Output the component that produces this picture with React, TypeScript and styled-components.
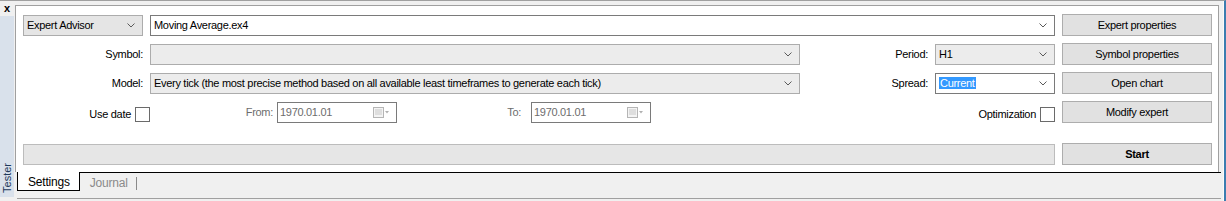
import styled, { createGlobalStyle } from "styled-components";

const GlobalStyle = createGlobalStyle`
    html, body {
        margin: 0;
        padding: 0;
        background: #f0f0f0;
    }
    * {
        box-sizing: border-box;
    }
`

const Frame = styled.div`
    display: flex;
    width: 1226px;
    height: 201px;
    background: #f0f0f0;
    border-top: 1px solid #a0a0a0;
    border-right: 2px solid #3c7db0;
    font-family: "Liberation Sans", Arial, sans-serif;
    font-size: 11px;
    letter-spacing: -0.3px;
    color: #000;
    overflow: hidden;
`
const Side = styled.div`
    display: flex;
    flex-direction: column;
    width: 15px;
    flex-shrink: 0;
`
const CloseX = styled.div`
    height: 15px;
    padding: 3px 0 0 4px;
    font-size: 11px;
    font-weight: bold;
    line-height: 9px;
    letter-spacing: 0;
`
const SideBar = styled.div`
    flex: 1;
    margin: 0 1px 4px 0;
    background: #d9e1eb;
    display: flex;
    flex-direction: column;
    justify-content: flex-end;
    align-items: center;
    padding-bottom: 4px;
`
const SideLabel = styled.span`
    writing-mode: vertical-rl;
    transform: rotate(180deg);
    font-size: 11px;
    letter-spacing: 0;
    color: #1e395b;
`
const Body = styled.div`
    flex: 1;
    display: flex;
    flex-direction: column;
    padding-top: 4px;
    padding-right: 4px;
    border-right: 1px solid #fafafa;
`
const Panel = styled.div`
    height: 167px;
    background: #fff;
    border: 1px solid #a0a0a0;
    border-bottom: none;
    padding: 8px 6px 0 7px;
    display: flex;
    flex-direction: column;
`
const Row = styled.div<{ $top?: number }>`
    display: flex;
    align-items: center;
    height: 22px;
    margin-top: ${p => p.$top ?? 7}px;
    &:first-child {
        margin-top: 0;
    }
`
const Label = styled.div<{ $w?: number; $gap?: number; $muted?: boolean }>`
    ${p => p.$w ? `width: ${p.$w}px; flex-shrink: 0;` : "flex: 1;"}
    text-align: right;
    padding-right: ${p => p.$gap ?? 7}px;
    color: ${p => p.$muted ? "#6d6d6d" : "#000"};
    white-space: nowrap;
`
const Combo = styled.div<{ $w?: number; $variant: "white" | "gray" | "button" }>`
    ${p => p.$w ? `width: ${p.$w}px; flex-shrink: 0;` : "flex: 1;"}
    height: 21px;
    display: flex;
    align-items: center;
    padding: 0 7px 0 3px;
    background: ${p => p.$variant === "white" ? "#fff" : p.$variant === "gray" ? "#ececec" : "#e5e5e5"};
    border: 1px solid ${p => p.$variant === "white" ? "#7a7a7a" : "#acacac"};
    white-space: nowrap;
    overflow: hidden;
`
const ComboText = styled.span`
    flex: 1;
    overflow: hidden;
`
const Selected = styled.span`
    background: #3399ff;
    color: #fff;
    padding: 3px 1px;
`
const Gap = styled.div<{ $w: number }>`
    width: ${p => p.$w}px;
    flex-shrink: 0;
`
const Button = styled.button<{ $bold?: boolean }>`
    width: 150px;
    height: 22px;
    flex-shrink: 0;
    margin-left: 7px;
    background: #e1e1e1;
    border: 1px solid #adadad;
    font-family: inherit;
    font-size: 11px;
    letter-spacing: -0.3px;
    font-weight: ${p => p.$bold ? "bold" : "normal"};
    color: #000;
    padding: 0;
`
const Check = styled.div`
    width: 15px;
    height: 15px;
    flex-shrink: 0;
    border: 1px solid #6a6a6a;
    background: #fff;
    margin-left: 4px;
`
const CheckCell = styled.div<{ $w?: number }>`
    ${p => p.$w ? `width: ${p.$w}px; flex-shrink: 0;` : "flex: 1;"}
    display: flex;
    align-items: center;
    justify-content: flex-end;
    white-space: nowrap;
    padding-top: 4px;
`
const DateBox = styled.div`
    width: 120px;
    height: 21px;
    flex-shrink: 0;
    display: flex;
    align-items: center;
    padding: 0 6px 0 2px;
    border: 1px solid #7a7a7a;
    background: #fff;
    color: #6d6d6d;
`
const Progress = styled.div`
    flex: 1;
    height: 21px;
    background: #e6e6e6;
    border: 1px solid #bcbcbc;
`
const TabBar = styled.div`
    display: flex;
    align-items: flex-start;
    height: 27px;
    margin-left: 2px;
    margin-right: -2px;
    border-top: 1px solid #000;
    border-bottom: 1px solid #a0a0a0;
    font-size: 12px;
    letter-spacing: -0.2px;
`
const Tab = styled.div<{ $active?: boolean }>`
    padding: ${p => p.$active ? "3px 9px 0 10px" : "3px 8px 0 10px"};
    height: ${p => p.$active ? "19px" : "18px"};
    margin-top: ${p => p.$active ? "-1px" : "0"};
    background: ${p => p.$active ? "#fff" : "transparent"};
    border: ${p => p.$active ? "1px solid #000" : "none"};
    border-top: none;
    color: ${p => p.$active ? "#000" : "#8a8a8a"};
`
const TabSep = styled.div`
    width: 1px;
    height: 13px;
    margin-top: 4px;
    background: #8a8a8a;
`

function Chevron() {
    return (
        <svg width="8" height="5" viewBox="0 0 8 5" style={{ flexShrink: 0 }}>
            <polyline points="0.5,0.5 4,4 7.5,0.5" fill="none" stroke="#5a5a5a" strokeWidth="1" />
        </svg>
    )
}

function CalendarIcon() {
    return (
        <svg width="17" height="11" viewBox="0 0 17 11" style={{ flexShrink: 0 }}>
            <rect x="0.5" y="0.5" width="10" height="10" fill="#f4f4f4" stroke="#b5b5b5" />
            <line x1="2" y1="3" x2="9" y2="3" stroke="#c8c8c8" />
            <line x1="2" y1="5" x2="9" y2="5" stroke="#c8c8c8" />
            <line x1="2" y1="7" x2="9" y2="7" stroke="#c8c8c8" />
            <polygon points="12,4 16,4 14,6.5" fill="#b0b0b0" />
        </svg>
    )
}

export default function App() {
    return (
        <>
            <GlobalStyle />
            <Frame>
                <Side>
                    <CloseX>x</CloseX>
                    <SideBar>
                        <SideLabel>Tester</SideLabel>
                    </SideBar>
                </Side>
                <Body>
                    <Panel>
                        <Row>
                            <Combo $w={120} $variant="button">
                                <ComboText>Expert Advisor</ComboText>
                                <Chevron />
                            </Combo>
                            <Gap $w={7} />
                            <Combo $variant="white">
                                <ComboText>Moving Average.ex4</ComboText>
                                <Chevron />
                            </Combo>
                            <Button>Expert properties</Button>
                        </Row>
                        <Row>
                            <Label $w={127}>Symbol:</Label>
                            <Combo $w={650} $variant="gray">
                                <ComboText></ComboText>
                                <Chevron />
                            </Combo>
                            <Label>Period:</Label>
                            <Combo $w={120} $variant="gray">
                                <ComboText>H1</ComboText>
                                <Chevron />
                            </Combo>
                            <Button>Symbol properties</Button>
                        </Row>
                        <Row>
                            <Label $w={127}>Model:</Label>
                            <Combo $w={650} $variant="gray">
                                <ComboText>Every tick (the most precise method based on all available least timeframes to generate each tick)</ComboText>
                                <Chevron />
                            </Combo>
                            <Label>Spread:</Label>
                            <Combo $w={120} $variant="white">
                                <ComboText><Selected>Current</Selected></ComboText>
                                <Chevron />
                            </Combo>
                            <Button>Open chart</Button>
                        </Row>
                        <Row>
                            <CheckCell $w={127}>
                                Use date
                                <Check />
                            </CheckCell>
                            <Label $w={127} $gap={4} $muted>From:</Label>
                            <DateBox>
                                <ComboText>1970.01.01</ComboText>
                                <CalendarIcon />
                            </DateBox>
                            <Label $w={134} $gap={10} $muted>To:</Label>
                            <DateBox>
                                <ComboText>1970.01.01</ComboText>
                                <CalendarIcon />
                            </DateBox>
                            <CheckCell>
                                Optimization
                                <Check />
                            </CheckCell>
                            <Button>Modify expert</Button>
                        </Row>
                        <Row $top={20}>
                            <Progress />
                            <Button $bold>Start</Button>
                        </Row>
                    </Panel>
                    <TabBar>
                        <Tab $active>Settings</Tab>
                        <Tab>Journal</Tab>
                        <TabSep />
                    </TabBar>
                </Body>
            </Frame>
        </>
    )
}
